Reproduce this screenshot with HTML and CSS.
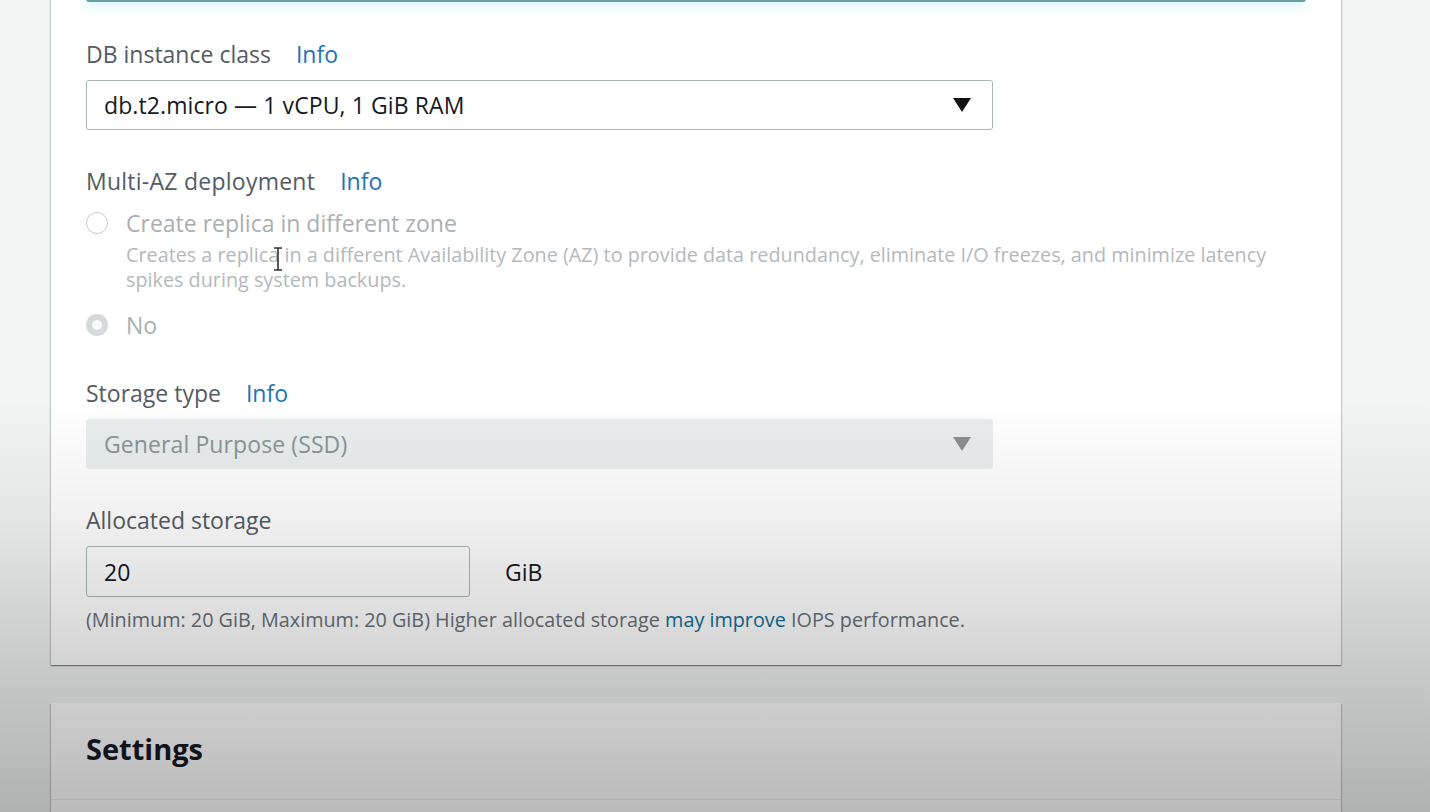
FILE: index.html
```html
<!DOCTYPE html>
<html lang="en">
<head>
<meta charset="utf-8">
<title>Instance specifications</title>
<link rel="stylesheet" href="styles.css">
</head>
<body>
<div class="page">
  <section class="panel panel-main">
    <div class="tile"></div>

    <div class="field field-first">
      <div class="label-row"><span class="label">DB instance class</span><a class="info">Info</a></div>
      <div class="select">
        <span class="select-text">db.t2.micro — 1 vCPU, 1 GiB RAM</span>
        <svg class="caret" width="18" height="14" viewBox="0 0 18 14"><path d="M0 0H18L9 14Z" fill="#111"/></svg>
      </div>
    </div>

    <div class="field field-az">
      <div class="label-row"><span class="label label-az">Multi-AZ deployment</span><a class="info">Info</a></div>
      <div class="radio-row">
        <span class="radio"></span>
        <div class="radio-body">
          <div class="radio-label">Create replica in different zone</div>
          <div class="radio-desc">Creates a replica in a different Availability Zone (AZ) to provide data redundancy, eliminate I/O freezes, and minimize latency spikes during system backups.</div>
        </div>
      </div>
      <div class="radio-row radio-row-no">
        <span class="radio radio-checked"></span>
        <div class="radio-body">
          <div class="radio-label">No</div>
        </div>
      </div>
    </div>

    <div class="field field-storage">
      <div class="label-row"><span class="label">Storage type</span><a class="info">Info</a></div>
      <div class="select select-disabled">
        <span class="select-text">General Purpose (SSD)</span>
        <svg class="caret" width="18" height="14" viewBox="0 0 18 14"><path d="M0 0H18L9 14Z" fill="#8a8f91"/></svg>
      </div>
    </div>

    <div class="field field-alloc">
      <div class="label-row"><span class="label">Allocated storage</span></div>
      <div class="input-row">
        <div class="input">20</div>
        <span class="unit">GiB</span>
      </div>
      <div class="hint">(Minimum: 20 GiB, Maximum: 20 GiB) Higher allocated storage <a class="hint-link">may improve</a> IOPS performance.</div>
    </div>
  </section>

  <section class="panel panel-settings">
    <div class="panel-header">
      <h2 class="panel-title">Settings</h2>
    </div>
  </section>
</div>

<svg class="ibeam" width="12" height="24" viewBox="0 0 12 24"><path d="M2 1H10M6 1V23M2 23H10" stroke="#333" stroke-width="1.6" fill="none"/></svg>
<div class="vignette"></div>
</body>
</html>
```

FILE: styles.css
```css
* { box-sizing: border-box; }

html, body {
  margin: 0;
  padding: 0;
  height: 100%;
  overflow: hidden;
}

body {
  background: #f2f3f3;
  font-family: "Open Sans", "Noto Sans", "Liberation Sans", sans-serif;
  color: #545b64;
  position: relative;
}

.page {
  width: 1290px;
  margin-left: 51px;
}

.panel {
  background: #ffffff;
  box-shadow: 0 1px 1px 0 rgba(0,28,36,0.3), 1px 1px 1px 0 rgba(0,28,36,0.15), -1px 1px 1px 0 rgba(0,28,36,0.15);
  padding: 0 35px;
}

.panel-main {
  padding-bottom: 32px;
}

.tile {
  height: 40px;
  margin-top: -38px;
  width: 1220px;
  border: 2px solid #6a9ea6;
  border-radius: 3px;
  background: #f6fdfe;
  box-shadow: 0 6px 10px rgba(200,240,245,0.5);
}

.field-first { margin-top: 38px; }

.label-row {
  display: flex;
  align-items: center;
  height: 28px;
  font-size: 23px;
}

.label { color: #545b64; }

.label-az { letter-spacing: 0.25px; }

.info {
  color: #1f74b6;
  margin-left: 25px;
}

.select {
  margin-top: 12px;
  width: 907px;
  height: 50px;
  border: 1px solid #aab7b8;
  border-radius: 3px;
  display: flex;
  align-items: center;
  justify-content: space-between;
  padding: 0 21px 0 17px;
  background: #fff;
}

.select-text {
  font-size: 23px;
  letter-spacing: 0.1px;
  color: #16191f;
}

.select-disabled {
  background: #eaeded;
  border-color: #eaeded;
}

.select-disabled .select-text { color: #879596; }

.field-az { margin-top: 37px; }

.radio-row {
  display: flex;
  align-items: flex-start;
  margin-top: 12px;
}

.radio {
  width: 22px;
  height: 22px;
  border: 1.5px solid #c8cccd;
  border-radius: 50%;
  flex: none;
  margin-top: 5px;
  background: #fff;
}

.radio-checked {
  border: 6px solid #d5d9da;
  background: #fafafa;
}

.radio-body { margin-left: 18px; }

.radio-label {
  font-size: 23px;
  color: #a9afb2;
  line-height: 32px;
}

.radio-desc {
  margin-top: 3px;
  font-size: 19.8px;
  line-height: 25px;
  color: #b3b9bc;
  width: 1160px;
}

.radio-row-no { margin-top: 17px; }

.field-storage { margin-top: 38px; }

.field-alloc { margin-top: 37px; }

.input-row {
  display: flex;
  align-items: center;
  margin-top: 12px;
}

.input {
  width: 384px;
  height: 51px;
  border: 1px solid #aab7b8;
  border-radius: 3px;
  background: #fff;
  display: flex;
  align-items: center;
  padding-left: 17px;
  font-size: 23px;
  color: #16191f;
}

.unit {
  margin-left: 35px;
  font-size: 23px;
  color: #16191f;
}

.hint {
  margin-top: 9px;
  font-size: 19.8px;
  color: #687078;
}

.hint-link { color: #0b6e99; }

.panel-settings {
  margin-top: 38px;
  height: 200px;
}

.panel-header {
  height: 97px;
  padding-top: 26px;
  border-bottom: 1px solid #eaeded;
  margin: 0 -35px;
  padding-left: 35px;
}

.panel-title {
  margin: 0;
  font-size: 29px;
  font-weight: 700;
  color: #16191f;
}

.ibeam {
  position: absolute;
  left: 272px;
  top: 247px;
}

.vignette {
  position: absolute;
  left: 0;
  top: 0;
  width: 100%;
  height: 100%;
  pointer-events: none;
  background: linear-gradient(to bottom, rgba(0,0,0,0) 0px, rgba(0,0,0,0) 400px, rgba(0,0,0,0.06) 520px, rgba(0,0,0,0.16) 650px, rgba(0,0,0,0.27) 812px);
}
```
